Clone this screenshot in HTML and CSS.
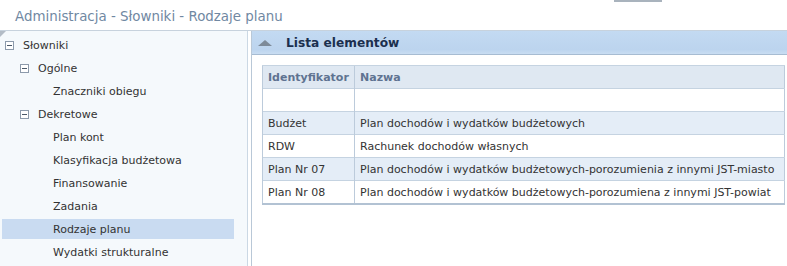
FILE: index.html
```html
<!DOCTYPE html>
<html lang="pl">
<head>
    <meta charset="UTF-8" />
    <title>Rodzaje planu</title>
    <link rel="stylesheet" href="styles.css">
</head>
<body>

    <!-- Nagłówek -->
    <div class="top">
        <div class="page-title">Administracja - Słowniki - Rodzaje planu</div>
        <div class="top-btn"></div>
    </div>

    <div class="main">
        <!-- Drzewo słowników -->
        <div class="sidebar">
            <div class="corner"></div>
            <div class="node lvl0"><span class="toggle"></span>Słowniki</div>
            <div class="node lvl1"><span class="toggle"></span>Ogólne</div>
            <div class="node lvl2">Znaczniki obiegu</div>
            <div class="node lvl1"><span class="toggle"></span>Dekretowe</div>
            <div class="node lvl2">Plan kont</div>
            <div class="node lvl2">Klasyfikacja budżetowa</div>
            <div class="node lvl2">Finansowanie</div>
            <div class="node lvl2">Zadania</div>
            <div class="node lvl2 selected">Rodzaje planu</div>
            <div class="node lvl2">Wydatki strukturalne</div>
        </div>

        <!-- Lista elementów -->
        <div class="content">
            <div class="panel-head">
                <span class="arrow-up"></span>
                <span class="panel-title">Lista elementów</span>
            </div>
            <table class="grid">
                <tr>
                    <th class="col-id">Identyfikator</th>
                    <th>Nazwa</th>
                </tr>
                <tr><td>&nbsp;</td><td>&nbsp;</td></tr>
                <tr class="alt"><td>Budżet</td><td>Plan dochodów i wydatków budżetowych</td></tr>
                <tr><td>RDW</td><td>Rachunek dochodów własnych</td></tr>
                <tr class="alt"><td>Plan Nr 07</td><td>Plan dochodów i wydatków budżetowych-porozumienia z innymi JST-miasto</td></tr>
                <tr><td>Plan Nr 08</td><td>Plan dochodów i wydatków budżetowych-porozumiena z innymi JST-powiat</td></tr>
            </table>
        </div>
    </div>

</body>
</html>
```

FILE: styles.css
```css
body {
  margin: 0;
  padding: 0;
  font-family: 'DejaVu Sans', Verdana, sans-serif;
  font-size: 11px;
  color: #333;
  background: #fff;
  height: 266px;
  overflow: hidden;
}

/* Nagłówek */
.top {
  display: flex;
  height: 30px;
}
.page-title {
  padding-left: 15px;
  line-height: 33px;
  font-size: 13.4px;
  color: #7088a2;
}
.top-btn {
  margin-left: auto;
  margin-right: 125px;
  width: 48px;
  height: 2px;
  background: #a9b3bd;
}

.main {
  display: flex;
  border-top: 1px solid #c7d2dd;
  height: 235px;
}

/* Drzewo */
.sidebar {
  position: relative;
  width: 248px;
  flex: none;
  background: #f5f9fc;
  border-right: 1px solid #cbd8e4;
  padding-top: 4px;
  box-sizing: border-box;
}
.corner {
  position: absolute;
  top: 0;
  left: 0;
  border-top: 6px solid #b3bcc6;
  border-right: 6px solid transparent;
}
.node {
  display: flex;
  align-items: center;
  height: 20px;
  margin-bottom: 3px;
  margin-right: 13px;
  margin-left: 2px;
  color: #333;
}
.lvl0 { padding-left: 3px; }
.lvl1 { padding-left: 18px; }
.lvl2 { padding-left: 51px; }
.node.selected {
  background: #c9dbf1;
}
.toggle {
  width: 7px;
  height: 7px;
  border: 1px solid #8c9aab;
  margin-right: 9px;
  position: relative;
  background: #fff;
}
.toggle::after {
  content: "";
  position: absolute;
  left: 1px;
  top: 3px;
  width: 5px;
  height: 1px;
  background: #4a5868;
}

/* Lista */
.content {
  flex: 1;
  margin-left: 3px;
  border-left: 1px solid #b9c8d7;
}
.panel-head {
  display: flex;
  align-items: center;
  height: 23px;
  background: linear-gradient(#c3daf2, #bcd4ee 80%, #c9ddf2);
  border-bottom: 1px solid #a7bcd2;
}
.arrow-up {
  width: 0;
  height: 0;
  margin-left: 6px;
  margin-right: 14px;
  border-left: 7px solid transparent;
  border-right: 7px solid transparent;
  border-bottom: 6px solid #7d8a98;
}
.panel-title {
  font-weight: bold;
  font-size: 12.2px;
  color: #1b2f4e;
}

.grid {
  margin-top: 10px;
  margin-left: 10px;
  width: 523px;
  border-collapse: collapse;
  border: 1px solid #bccbdb;
  border-bottom: 2px solid #b2c2d3;
}
.grid th, .grid td {
  height: 22px;
  padding: 0 5px;
  text-align: left;
  white-space: nowrap;
  border-top: 1px solid #c5d3e1;
  border-left: 1px solid #bccbdb;
}
.grid th {
  background: #dfe8f2;
  color: #5f7391;
  font-weight: bold;
}
.grid .col-id {
  width: 81px;
}
.grid td {
  color: #333;
}
.grid tr.alt td {
  background: #e4edf7;
}
```
